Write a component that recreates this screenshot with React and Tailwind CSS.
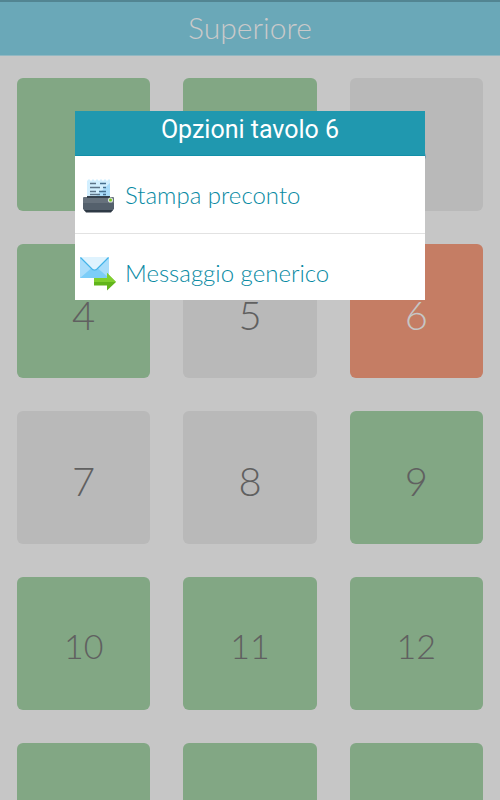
const TONES = {
  free: 'bg-[#82a784] text-[#606060]',
  idle: 'bg-[#b9b9b9] text-[#606060]',
  busy: 'bg-[#c57d64] text-[#c6c6c6]',
};

const TABLES = [
  'free', 'free', 'idle',
  'free', 'idle', 'busy',
  'idle', 'idle', 'free',
  'free', 'free', 'free',
  'free', 'free', 'free',
].map((tone, i) => ({ number: i + 1, tone }));

function PrinterIcon() {
  return (
    <svg viewBox="-1 -1 36 36" className="size-9 shrink-0" aria-hidden="true">
      <path d="M6 20V3l2-2 2 2 2-2 2 2 2-2 2 2 2-2 2 2 2-2 2 2 2-2 1 1v19z" fill="#d2efff" />
      <path d="M29 5v15H13z" fill="#a9dcfb" />
      <path d="M9 5.500h6M9 9.500h10M9 13.500h6M9 16.500h10" stroke="#5d7488" strokeWidth="1.300" />
      <path d="M19 5.500h6M22 9.500h3M18 13.500h7M22 16.500h3" stroke="#466f8f" strokeWidth="1.300" />
      <rect x="2" y="19" width="31" height="12" rx="1" fill="#66717c" />
      <rect x="6" y="18" width="23" height="2" fill="#35414d" />
      <path d="M2 25h31v6l-2 2H4l-2-2z" fill="#54606c" />
      <path d="M3 32h29l-2 2.500H5z" fill="#2e3945" />
      <circle cx="29.500" cy="22" r="2.600" fill="#d9e2dc" />
      <circle cx="29.500" cy="22" r="1.500" fill="#78c51c" />
    </svg>
  );
}

function MailIcon() {
  return (
    <svg viewBox="0 0 36 36" className="size-9 shrink-0" aria-hidden="true">
      <rect x="0" y="2" width="29" height="21" fill="#a9ddfb" />
      <path d="M0 23l11-9.500h7L29 23z" fill="#7ccdf8" />
      <path d="M0 2h29L17 14.500q-2.500 2-5 0z" fill="#dff3fe" />
      <path d="M0.500 2.500L12 14q2.500 2.200 5 0L28.500 2.500" fill="none" stroke="#42b3e8" strokeWidth="1.200" />
      <path d="M14 23h13v-5l9 9-9 8.500v-5H14z" fill="#62b51b" />
      <path d="M14 23h13v-5l9 9H14z" fill="#80cf2e" />
    </svg>
  );
}

const OPTIONS = [
  { label: 'Stampa preconto', Icon: PrinterIcon },
  { label: 'Messaggio generico', Icon: MailIcon },
];

function TableTile({ number, tone }) {
  return (
    <button
      type="button"
      className={`flex aspect-square items-center justify-center rounded-md leading-none font-light ${
        number > 9 ? 'pt-1 text-[34px]' : 'pt-2 text-[40px]'
      } ${TONES[tone]}`}
    >
      {number}
    </button>
  );
}

export default function App() {
  return (
    <div className="relative h-screen overflow-hidden bg-[#c6c6c6] font-[Lato,sans-serif]">
      <header className="flex h-14 items-center justify-center border-t-2 border-b border-t-[#528592] border-b-[#92b8c2] bg-[#6aa8b8]">
        <h1 className="pb-1 text-[30px] leading-none font-light text-[#cacaca]">Superiore</h1>
      </header>

      <main className="grid grid-cols-3 gap-[33px] px-[17px] pt-[22px]">
        {TABLES.map((table) => (
          <TableTile key={table.number} {...table} />
        ))}
      </main>

      <div className="absolute inset-0 flex items-start justify-center pt-[111px]">
        <section
          role="dialog"
          aria-labelledby="options-title"
          className="w-[70%] bg-white"
        >
          <h2
            id="options-title"
            className="h-[45px] border-b border-[#128fa8] bg-[#2098af] pt-1 text-center font-[Roboto,sans-serif] text-[25px] leading-[30px] text-white"
          >
            Opzioni tavolo 6
          </h2>
          <ul className="h-36 divide-y divide-[#e2e2e2] overflow-hidden">
            {OPTIONS.map(({ label, Icon }) => (
              <li key={label}>
                <button
                  type="button"
                  className="flex h-[77px] w-full items-center gap-[9px] px-[5px] text-left text-2xl font-light text-[#088aa3]"
                >
                  <Icon />
                  {label}
                </button>
              </li>
            ))}
          </ul>
        </section>
      </div>
    </div>
  );
}
